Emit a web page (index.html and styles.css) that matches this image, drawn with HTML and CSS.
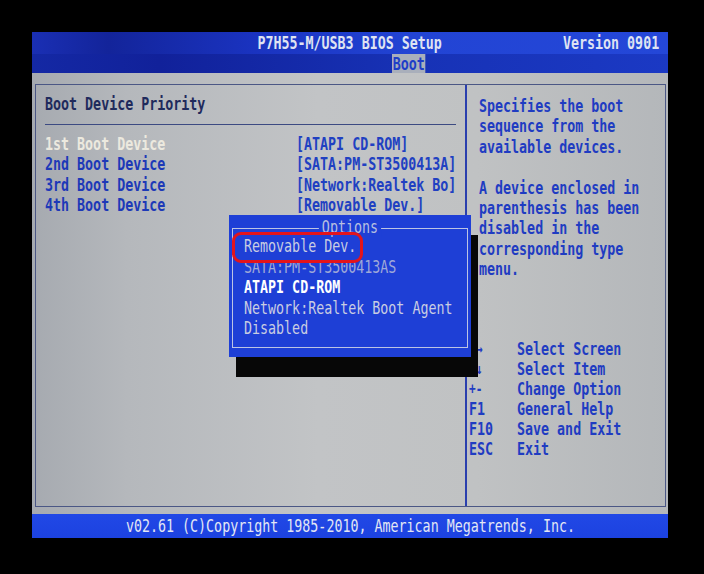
FILE: index.html
```html
<!DOCTYPE html>
<html>
<head>
<meta charset="utf-8">
<link rel="stylesheet" href="styles.css">
</head>
<body>
<div class="screen">
  <div class="titlebar">
    <span></span>
    <span class="t tc title">P7H55-M/USB3 BIOS Setup</span>
    <span class="t tr ver">Version 0901</span>
  </div>
  <div class="tabbar"><span class="t tab">Boot</span></div>
  <div class="main">
    <div class="panel">
      <div class="left">
        <div class="heading"><span class="t">Boot Device Priority</span></div>
        <div class="rule"></div>
        <div class="items">
          <div class="row sel"><span class="t">1st Boot Device</span><span class="t val">[ATAPI CD-ROM]</span></div>
          <div class="row"><span class="t">2nd Boot Device</span><span class="t val">[SATA:PM-ST3500413A]</span></div>
          <div class="row"><span class="t">3rd Boot Device</span><span class="t val">[Network:Realtek Bo]</span></div>
          <div class="row"><span class="t">4th Boot Device</span><span class="t val">[Removable Dev.]</span></div>
        </div>
      </div>
      <div class="right">
        <div class="help">
          <div><span class="t">Specifies the boot</span></div>
          <div><span class="t">sequence from the</span></div>
          <div><span class="t">available devices.</span></div>
          <div class="blank"></div>
          <div><span class="t">A device enclosed in</span></div>
          <div><span class="t">parenthesis has been</span></div>
          <div><span class="t">disabled in the</span></div>
          <div><span class="t">corresponding type</span></div>
          <div><span class="t">menu.</span></div>
        </div>
        <div class="keys">
          <div class="key"><span class="t k arr">←→</span><span class="t">Select Screen</span></div>
          <div class="key"><span class="t k arr">↑↓</span><span class="t">Select Item</span></div>
          <div class="key"><span class="t k arr">+-</span><span class="t">Change Option</span></div>
          <div class="key"><span class="t k">F1</span><span class="t">General Help</span></div>
          <div class="key"><span class="t k">F10</span><span class="t">Save and Exit</span></div>
          <div class="key"><span class="t k">ESC</span><span class="t">Exit</span></div>
        </div>
      </div>
    </div>
  </div>
  <div class="footer"><span class="t tc">v02.61 (C)Copyright 1985-2010, American Megatrends, Inc.</span></div>

  <div class="popup">
    <div class="frame">
      <div class="ptitle"><span class="t tc">Options</span></div>
      <div class="opt"><span class="t">Removable Dev.</span></div>
      <div class="opt dim"><span class="t">SATA:PM-ST3500413AS</span></div>
      <div class="opt cur"><span class="t">ATAPI CD-ROM</span></div>
      <div class="opt"><span class="t">Network:Realtek Boot Agent</span></div>
      <div class="opt"><span class="t">Disabled</span></div>
    </div>
    <div class="mark"></div>
  </div>
</div>
</body>
</html>
```

FILE: styles.css
```css
html, body {
  margin: 0;
  padding: 0;
  background: #000;
}
body {
  width: 704px;
  height: 574px;
  overflow: hidden;
  font-family: "DejaVu Sans Mono", monospace;
  font-size: 18px;
  font-weight: bold;
}
.t {
  display: inline-block;
  white-space: pre;
  transform: scaleX(0.74);
  transform-origin: 0 50%;
}
.tc { transform-origin: 50% 50%; }
.tr { transform-origin: 100% 50%; }

.screen {
  position: relative;
  margin: 32px 0 0 32px;
  width: 636px;
  height: 506px;
  display: flex;
  flex-direction: column;
}

.titlebar {
  height: 22px;
  line-height: 22px;
  display: grid;
  grid-template-columns: 1fr auto 1fr;
  background: linear-gradient(90deg, #1a2fb4 0%, #13249a 12%, #1a33c0 35%, #2244d4 60%, #2447d8 100%);
  color: #dfe3f2;
}
.ver {
  justify-self: end;
  padding-right: 12px;
}

.tabbar {
  height: 19px;
  line-height: 19px;
  padding-left: 360px;
  background: linear-gradient(90deg, #1428a4 0%, #11219a 20%, #1732b6 60%, #1b39c4 100%);
}
.tab {
  height: 19px;
  padding: 0 1px;
  background: #a9afbb;
  color: #1f3ec8;
}

.main {
  flex: 1;
  display: flex;
  flex-direction: column;
  padding: 11px 2px 7px 3px;
  background: linear-gradient(90deg, #a6aab0 0%, #b5b8bc 15%, #c2c4c6 45%, #c0c2c3 70%, #b4b7ba 100%);
}
.panel {
  flex: 1;
  display: grid;
  grid-template-columns: 431px 1fr;
  border: 1px solid #4b5785;
}
.left {
  border-right: 2px solid #2a3fae;
  padding: 9px 0 0 9px;
  min-width: 0;
}
.heading {
  height: 20px;
  line-height: 20px;
  color: #1f2a5c;
}
.rule {
  width: 411px;
  margin: 10px 0 9px;
  border-top: 1px solid #3c4a82;
}
.row {
  display: grid;
  grid-template-columns: 251px auto;
  height: 20.4px;
  line-height: 20.4px;
  color: #1d39b8;
}
.row.sel > .t:first-child { color: #ece9df; }
.val { color: #2040c2; }

.right {
  padding-top: 11px;
  color: #1f3cc2;
  min-width: 0;
}
.help {
  padding-left: 12px;
  line-height: 20.4px;
}
.help > div { height: 20.4px; }
.keys {
  margin-top: 59px;
  padding-left: 2px;
}
.key {
  display: grid;
  grid-template-columns: 48px auto;
  height: 20px;
  line-height: 20px;
}
.k { color: #1f3cc2; }
.arr { font-size: 15px; }

.footer {
  height: 24px;
  line-height: 24px;
  text-align: center;
  background: linear-gradient(180deg, #2148e6 0%, #1c42e0 100%);
  color: #e3e7f4;
  font-weight: normal;
}

.popup {
  position: absolute;
  left: 197px;
  top: 183px;
  width: 242px;
  height: 142px;
  box-sizing: border-box;
  padding: 13px 3px 9px 3px;
  display: flex;
  background: #1e3fd6;
  box-shadow: 7px 20px 0 #070707;
  z-index: 2;
}
.frame {
  position: relative;
  flex: 1 1 0;
  min-width: 0;
  border: 1px solid #bcc4e4;
  padding: 7px 0 0 11px;
  color: #c9cde2;
}
.ptitle {
  position: absolute;
  left: 0;
  right: 0;
  top: -12px;
  text-align: center;
  line-height: 20px;
}
.ptitle .t {
  background: #1e3fd6;
  padding: 0 4px;
  color: #b8bfe0;
  font-weight: normal;
  line-height: 20px;
}
.opt {
  height: 20.5px;
  line-height: 20.5px;
  font-weight: normal;
}
.opt.dim { color: #9ea8d8; }
.opt.cur { color: #ffffff; font-weight: bold; }

.mark {
  position: absolute;
  left: 3px;
  top: 17px;
  width: 131px;
  height: 31px;
  box-sizing: border-box;
  border: 3px solid #e3141c;
  border-radius: 9px;
}
```
